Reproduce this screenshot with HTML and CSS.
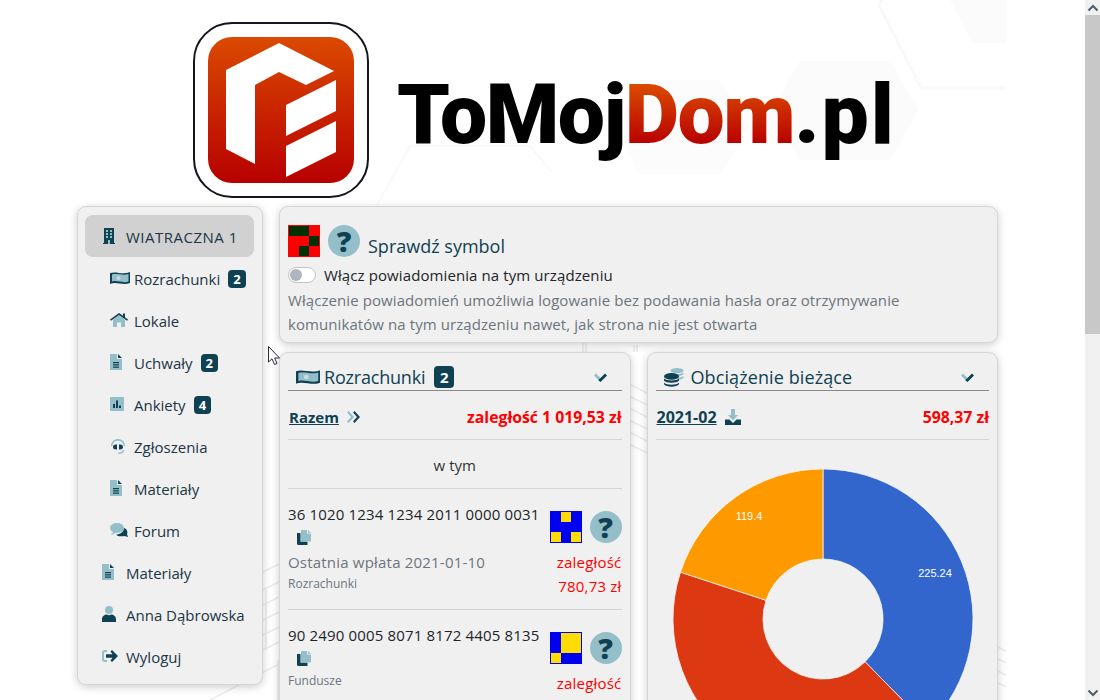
FILE: index.html
```html
<!DOCTYPE html>
<html lang="pl">
<head>
  <meta charset="UTF-8" />
  <meta name="viewport" content="width=device-width, initial-scale=1.0"/>
  <title>ToMojDom.pl</title>
  <link rel="stylesheet" href="styles.css">
</head>
<body>
  <div class="page">
    <div class="wrap">
      <!-- tlo: blade szesciokaty i linie budynku -->
      <svg class="bg-art" width="1006" height="700" viewBox="0 0 1006 700" fill="none">
        <path d="M879 5 L921 88 L1006 88 M879 5 L882 0" stroke="#f9f9f9" stroke-width="3"/>
        <path d="M950 0 L973 43 L1006 43 L1006 0 Z" fill="#fbfbfb"/>
        <path d="M800 61 L890 61 L918 110 L890 160 L800 160 L772 110 Z" fill="#fbfbfb"/>
        <path d="M640 80 L720 80 L750 127 L720 175 L640 175 L617 127 Z" fill="#fcfcfc"/>
        <path d="M376 207 L410 146 L530 146 L552 172" stroke="#f9f9f9" stroke-width="2"/>
        <g stroke="#ececec" stroke-width="1.500">
          <path d="M583 343 V352 M586 343 V352 M634 352 V345 M637 352 V345"/>
          <path d="M263 572 L279 564 M263 590 L279 582 M263 605 L279 597 M263 620 L279 612 M263 635 L279 627 M263 650 L279 642 M210 700 L279 664 M266 590 V650 M278 660 V700 M281 660 V700"/>
          <path d="M631 385 L647 393 M631 397 L647 405 M631 409 L647 417 M631 421 L647 429 M631 433 L647 441 M631 445 L647 453"/>
          <path d="M998 647 L1006 651 M998 659 L1006 663 M998 671 L1006 675 M998 683 L1006 687"/>
        </g>
      </svg>

      <header class="brand">
        <svg class="logo" width="176" height="176" viewBox="0 0 176 176">
          <defs>
            <linearGradient id="red" x1="0" y1="0" x2="0" y2="1">
              <stop offset="0" stop-color="#db4a00"/>
              <stop offset="1" stop-color="#b70000"/>
            </linearGradient>
          </defs>
          <rect x="1" y="1" width="174" height="174" rx="38" fill="#fff" stroke="#15151f" stroke-width="2"/>
          <rect x="15" y="15" width="146" height="146" rx="24" fill="url(#red)"/>
          <path fill="#fff" d="M33 48 L86 21 L141 49 L113 63 L86 50 L62 63 L62 142 L33 127 Z"/>
          <path fill="#fff" d="M93 83 L143 58 L143 89 L93 114 Z"/>
          <path fill="#fff" d="M93 124 L143 99 L143 130 L93 155 Z"/>
        </svg>
        <div class="brand-name">ToMoj<span class="brand-accent">Dom</span><span class="brand-tld">.pl</span></div>
      </header>

      <div class="columns">
        <nav class="card sidebar">
          <a class="nav-item active"><span class="slot"><svg width="12" height="16" viewBox="0 0 12 16"><path class="d" d="M1 0H11V15H12V16H0V15H1Z"/><path class="l" d="M3 2h2v2H3zM7 2h2v2H7zM3 5h2v2H3zM7 5h2v2H7zM3 8h2v2H3zM7 8h2v2H7z"/><path class="l" d="M5 12h2v4H5z"/></svg></span>WIATRACZNA 1</a>
          <a class="nav-item sub"><span class="slot"><svg width="20" height="14" viewBox="0 0 20 14"><path class="l" d="M1 3 C6 1 12 5 19 2 V11 C13 14 7 9 1 12 Z"/><path class="d" d="M0 2 C6 0 13 4 20 1 V12 C13 15 6 10 0 13 Z M2 3.500 V10.500 C7 9 13 12.500 18.500 10.500 V3 C13 5 7 2 2 3.500 Z"/><circle cx="8.500" cy="7" r="2" fill="#c5dde2"/></svg></span>Rozrachunki<span class="badge">2</span></a>
          <a class="nav-item sub"><span class="slot"><svg width="18" height="14" viewBox="0 0 18 14"><path class="l" d="M3 7 L9 2 L15 7 V14 H11 V9.500 H7 V14 H3 Z"/><path class="d" d="M0 6.500 L9 0 L13 2.800 V0.500 H15 V4.300 L18 6.500 L17 7.700 L9 2 L1 7.700 Z"/></svg></span>Lokale</a>
          <a class="nav-item sub"><span class="slot"><svg width="12" height="16" viewBox="0 0 12 16"><path class="l" d="M0 0H7V5H12V16H0Z"/><path class="d" d="M8 0L12 4H8ZM3 8h6v1.200H3zM3 10.300h6v1.200H3zM3 12.600h6v1.200H3z"/></svg></span>Uchwały<span class="badge">2</span></a>
          <a class="nav-item sub"><span class="slot"><svg width="14" height="14" viewBox="0 0 14 14"><rect class="l" width="14" height="14" rx="1"/><path class="d" d="M3 7h2v4H3zM6 3.500h2V11H6zM9 8.500h2V11H9z"/></svg></span>Ankiety<span class="badge">4</span></a>
          <a class="nav-item sub"><span class="slot"><svg width="16" height="16" viewBox="0 0 16 16"><path class="l" d="M1 8 C1 -1.500 15 -1.500 15 8 H13.500 C13.500 1 2.500 1 2.500 8 Z M12.500 12 H14 C14 15 12 15.800 8 15.800 V14.500 C11 14.500 12.500 14 12.500 12 Z"/><path class="d" d="M7 6.500 C4 6 3 7.500 3 9 C3 10.500 4 12 7 11.500 Z M9 6.500 C12 6 13 7.500 13 9 C13 10.500 12 12 9 11.500 Z"/></svg></span>Zgłoszenia</a>
          <a class="nav-item sub"><span class="slot"><svg width="12" height="16" viewBox="0 0 12 16"><path class="l" d="M0 0H7V5H12V16H0Z"/><path class="d" d="M8 0L12 4H8ZM3 8h6v1.200H3zM3 10.300h6v1.200H3zM3 12.600h6v1.200H3z"/></svg></span>Materiały</a>
          <a class="nav-item sub"><span class="slot"><svg width="18" height="14" viewBox="0 0 18 14"><ellipse class="l" cx="7" cy="5" rx="7" ry="5"/><path class="l" d="M1 12 L4 8 L6 9.500 C4 11 3 12 1 12Z"/><path class="d" d="M14 5 C17 6 18 9 17 11 L18 14 L14.500 13 C12 13.500 7 13.500 6 11.500 C10 11.500 14 9 14 5Z"/></svg></span>Forum</a>
          <a class="nav-item"><span class="slot"><svg width="12" height="16" viewBox="0 0 12 16"><path class="l" d="M0 0H7V5H12V16H0Z"/><path class="d" d="M8 0L12 4H8ZM3 8h6v1.200H3zM3 10.300h6v1.200H3zM3 12.600h6v1.200H3z"/></svg></span>Materiały</a>
          <a class="nav-item"><span class="slot"><svg width="14" height="16" viewBox="0 0 14 16"><circle class="l" cx="7" cy="4" r="4"/><path class="d" d="M0 16 V13 C0 10 3 8.500 4.500 8.500 C6 9.500 8 9.500 9.500 8.500 C11 8.500 14 10 14 13 V16 Z"/></svg></span>Anna Dąbrowska</a>
          <a class="nav-item"><span class="slot"><svg width="16" height="14" viewBox="0 0 16 14"><path class="l" d="M5 1 V3 H3 C2.400 3 2 3.400 2 4 V10 C2 10.600 2.400 11 3 11 H5 V13 H3 C1.300 13 0 11.700 0 10 V4 C0 2.300 1.300 1 3 1 Z"/><path class="d" d="M10 1 L16 7 L10 13 L8.500 11.500 L10.500 8.800 H4 V5.200 H10.500 L8.500 2.500 Z"/></svg></span>Wyloguj</a>
        </nav>

        <main class="content">
          <section class="card notify">
            <div class="symbol-row">
              <svg width="32" height="32" viewBox="0 0 32 32" shape-rendering="crispEdges"><rect width="32" height="32" fill="#f00"/><path fill="#003200" d="M1 1h20v10H1zM21 11h10v10H21zM11 21h10v10H11z"/></svg>
              <span class="help">?</span>
              <span class="symbol-title">Sprawdź symbol</span>
            </div>
            <div class="toggle-row"><span class="toggle"><span class="knob"></span></span>Włącz powiadomienia na tym urządzeniu</div>
            <p class="hint">Włączenie powiadomień umożliwia logowanie bez podawania hasła oraz otrzymywanie komunikatów na tym urządzeniu nawet, jak strona nie jest otwarta</p>
          </section>

          <div class="panels">
            <section class="card panel">
              <h3 class="panel-title">
                <svg class="title-ico" width="24" height="16" viewBox="0 0 20 14" preserveAspectRatio="none"><path class="l" d="M1 3 C6 1 12 5 19 2 V11 C13 14 7 9 1 12 Z"/><path class="d" d="M0 2 C6 0 13 4 20 1 V12 C13 15 6 10 0 13 Z M2 3.500 V10.500 C7 9 13 12.500 18.500 10.500 V3 C13 5 7 2 2 3.500 Z"/><circle cx="8.500" cy="7" r="2" fill="#c5dde2"/></svg>
                <span class="title-tight">Rozrachunki</span><span class="badge big">2</span>
                <svg class="chevron" width="13" height="9" viewBox="0 0 13 9"><path class="l" d="M0 2.500 L2 0.500 L6.500 5 L6.500 9 Z"/><path class="d" d="M13 2.500 L11 0.500 L6 5.500 L4.200 7 L6.500 9 Z"/></svg>
              </h3>
              <div class="sum-row">
                <span class="sum-left"><a class="sum-link">Razem</a><svg width="14" height="12" viewBox="0 0 14 12"><path class="l" d="M0 1.500 L1.500 0 L7 6 L1.500 12 L0 10.500 L4 6 Z"/><path class="d" d="M6 1.500 L7.500 0 L13 6 L7.500 12 L6 10.500 L10 6 Z"/></svg></span>
                <b class="debt">zaległość 1 019,53 zł</b>
              </div>
              <div class="of-which">w tym</div>
              <div class="account">
                <div class="account-info">
                  <div class="iban">36 1020 1234 1234 2011 0000 0031</div>
                  <svg class="copy" width="14" height="15" viewBox="0 0 14 15"><path class="l" d="M4 0H10V3.500H14V11.500H4Z"/><path class="l" d="M11 0L14 2.800H11Z"/><path class="d" d="M0 3H3.500V11.800H10.500V15H1.500C0.600 15 0 14.400 0 13.500Z"/></svg>
                  <div class="muted">Ostatnia wpłata 2021-01-10</div>
                  <div class="small">Rozrachunki</div>
                </div>
                <div class="account-side">
                  <div class="marks">
                    <svg width="32" height="32" viewBox="0 0 32 32" shape-rendering="crispEdges"><rect width="32" height="32" fill="#0000f0"/><path fill="#ffdd00" d="M11 1h10v10H11zM1 21h10v10H1zM21 21h10v10H21z"/></svg>
                    <span class="help">?</span>
                  </div>
                  <div class="owed">zaległość<br>780,73 zł</div>
                </div>
              </div>
              <div class="account last">
                <div class="account-info">
                  <div class="iban">90 2490 0005 8071 8172 4405 8135</div>
                  <svg class="copy" width="14" height="15" viewBox="0 0 14 15"><path class="l" d="M4 0H10V3.500H14V11.500H4Z"/><path class="l" d="M11 0L14 2.800H11Z"/><path class="d" d="M0 3H3.500V11.800H10.500V15H1.500C0.600 15 0 14.400 0 13.500Z"/></svg>
                  <div class="small after-copy">Fundusze</div>
                </div>
                <div class="account-side">
                  <div class="marks">
                    <svg width="32" height="32" viewBox="0 0 32 32" shape-rendering="crispEdges"><rect width="32" height="32" fill="#0000f0"/><path fill="#ffdd00" d="M11 1h20v20H11zM1 21h10v10H1z"/></svg>
                    <span class="help">?</span>
                  </div>
                  <div class="owed">zaległość</div>
                </div>
              </div>
            </section>

            <section class="card panel">
              <h3 class="panel-title">
                <svg class="title-ico" width="20" height="19" viewBox="0 0 20 18" preserveAspectRatio="none"><g class="l"><ellipse cx="13" cy="2.500" rx="6.500" ry="2.500"/><path d="M7 5 C9 6 17 6 19.500 4.500 V6 C18 7.500 14 8 12 7.500 Z"/><path d="M14 9 C16 9 18 8.500 19.500 7.500 V9.500 C18.500 10.500 16 11 14 11 Z"/></g><g class="d"><ellipse cx="7.500" cy="8" rx="7.500" ry="3.200"/><path d="M0 10 C2 12.500 13 12.500 15 10 V12 C13 14.500 2 14.500 0 12 Z"/><path d="M0 14 C2 16.500 13 16.500 15 14 V15.500 C13 18.500 2 18.500 0 15.500 Z"/></g></svg>
                <span class="title-gap">Obciążenie bieżące</span>
                <svg class="chevron" width="13" height="9" viewBox="0 0 13 9"><path class="l" d="M0 2.500 L2 0.500 L6.500 5 L6.500 9 Z"/><path class="d" d="M13 2.500 L11 0.500 L6 5.500 L4.200 7 L6.500 9 Z"/></svg>
              </h3>
              <div class="sum-row">
                <span class="sum-left"><a class="sum-link date">2021-02</a><svg width="16" height="16" viewBox="0 0 16 16"><path class="l" d="M6 0H10V6H13L8 11.500L3 6H6Z"/><path class="d" d="M0 10.500H4.500L8 14L11.500 10.500H16V16H0Z"/></svg></span>
                <b class="debt">598,37 zł</b>
              </div>
              <svg class="donut" width="300" height="300" viewBox="0 0 300 300">
                <path fill="#3366cc" stroke="#fff" stroke-width="0.700" d="M150 0 A150 150 0 0 1 255.100 257 L192.100 192.800 A60 60 0 0 0 150 90 Z"/>
                <path fill="#dc3912" stroke="#fff" stroke-width="0.700" d="M255.100 257 A150 150 0 0 1 7.500 103.200 L93 131.300 A60 60 0 0 0 192.100 192.800 Z"/>
                <path fill="#ff9900" stroke="#fff" stroke-width="0.700" d="M7.500 103.200 A150 150 0 0 1 150 0 L150 90 A60 60 0 0 0 93 131.300 Z"/>
                <text class="donut-label" x="262" y="108" text-anchor="middle">225.24</text>
                <text class="donut-label" x="76" y="51" text-anchor="middle">119.4</text>
              </svg>
            </section>
          </div>
        </main>
      </div>

      <!-- kursor myszy nad trescia -->
      <svg class="cursor" width="13" height="20" viewBox="0 0 13 20"><path d="M0.500 0.500 V16 L4 12.800 L6.500 18.500 L9 17.400 L6.600 12 H11.500 Z" fill="#fff" stroke="#2a2a35" stroke-width="1"/></svg>
    </div>

    <aside class="scrollbar">
      <span class="scroll-btn"><svg width="12" height="8" viewBox="0 0 12 8"><path d="M1.500 6.500 L6 2 L10.500 6.500" fill="none" stroke="#505a6e" stroke-width="2"/></svg></span>
      <span class="scroll-thumb"></span>
      <span class="scroll-rest"></span>
      <span class="scroll-btn"><svg width="12" height="8" viewBox="0 0 12 8"><path d="M1.500 1.500 L6 6 L10.500 1.500" fill="none" stroke="#505a6e" stroke-width="2"/></svg></span>
    </aside>
  </div>
</body>
</html>
```

FILE: styles.css
```css
html, body {
  margin: 0;
  height: 700px;
  overflow: hidden;
  background: #fff;
}

body {
  font-family: 'Open Sans', 'Noto Sans', sans-serif;
  font-size: 15px;
  color: #212529;
}

.page {
  display: flex;
  height: 700px;
  overflow: hidden;
}

.wrap {
  position: relative;
  flex: 0 0 1006px;
  height: 700px;
  overflow: hidden;
}

.bg-art {
  position: absolute;
  top: 0;
  left: 0;
}

.cursor {
  position: absolute;
  top: 346px;
  left: 268px;
}

.d { fill: #0f4153; }
.l { fill: #94bfc9; }

/* naglowek z logo */
.brand {
  position: relative;
  display: flex;
  align-items: center;
  height: 176px;
  padding: 22px 0 8px 193px;
}

.brand-name {
  margin: 10px 0 0 28px;
  font-family: 'Roboto', 'Liberation Sans', sans-serif;
  font-size: 84px;
  font-weight: 900;
  line-height: 100px;
  letter-spacing: -1.5px;
  color: #000;
}

.brand-accent {
  background: linear-gradient(#db4a00 20%, #b70000 80%);
  -webkit-background-clip: text;
  background-clip: text;
  color: transparent;
}

.brand-tld {
  letter-spacing: 2px;
}

.columns {
  position: relative;
  display: flex;
  align-items: flex-start;
  gap: 16px;
  padding-left: 77px;
}

.card {
  background: #f0f0f0;
  border: 1px solid #d6d6d6;
  border-radius: 9px;
  box-shadow: 0 2px 8px rgba(0, 0, 0, 0.2);
  box-sizing: border-box;
}

.sidebar {
  flex: 0 0 186px;
  padding: 8px 8px 7px 7px;
  height: 479px;
}

.nav-item {
  display: flex;
  align-items: center;
  box-sizing: border-box;
  height: 42px;
  padding: 2px 0 0 17px;
  font-size: 15px;
  color: #1c3545;
}

.slot {
  display: flex;
  flex: 0 0 24px;
  align-items: center;
  margin-top: -2px;
}

.nav-item.sub {
  padding-left: 25px;
}

.nav-item.active {
  background: #d1d1d1;
  border-radius: 8px;
  letter-spacing: 0.5px;
}

.nav-item.active .slot svg {
  margin-left: 1px;
}

.badge {
  display: inline-block;
  margin-left: 8px;
  padding: 0 5px;
  min-width: 6px;
  height: 18px;
  line-height: 18px;
  border-radius: 4px;
  background: #0f4153;
  color: #fff;
  font-size: 13px;
  font-weight: 700;
  text-align: center;
}

.badge.big {
  min-width: 10px;
  height: 22px;
  margin-left: 9px;
  line-height: 22px;
  font-size: 15px;
}

.content {
  flex: 0 0 719px;
}

.notify {
  height: 137px;
  padding: 18px 8px 0;
}

.symbol-row {
  display: flex;
  align-items: flex-end;
  height: 32px;
}

.help {
  display: flex;
  flex: none;
  align-items: center;
  justify-content: center;
  width: 32px;
  height: 32px;
  border-radius: 50%;
  background: #94bfc9;
  color: #0f4153;
  font-size: 29px;
  font-weight: 800;
  line-height: 32px;
}

.symbol-row .help {
  margin-left: 8px;
}

.symbol-title {
  margin: 0 0 -1px 8px;
  font-size: 18px;
  line-height: 24px;
  color: #0f4153;
}

.toggle-row {
  display: flex;
  align-items: center;
  height: 20px;
  margin-top: 8px;
  font-size: 15px;
  letter-spacing: 0.1px;
}

.toggle {
  flex: none;
  box-sizing: border-box;
  width: 28px;
  height: 16px;
  margin-right: 8px;
  padding: 1px;
  border: 1px solid #c4c4c4;
  border-radius: 8px;
  background: #fff;
}

.knob {
  display: block;
  width: 12px;
  height: 12px;
  border-radius: 50%;
  background: #adb5bd;
}

.hint {
  margin: 3px 0 0;
  font-size: 15px;
  line-height: 24px;
  letter-spacing: 0.08px;
  color: #6c757d;
}

.panels {
  display: flex;
  gap: 16px;
  margin-top: 9px;
}

.panel {
  flex: 1 1 0;
  height: 420px;
  padding: 0 8px;
  overflow: hidden;
}

.panel-title {
  display: flex;
  align-items: center;
  margin: 0;
  height: 26px;
  padding: 11px 0 0 8px;
  font-size: 18px;
  font-weight: 400;
  color: #0f4153;
  border-bottom: 1px solid #888;
}

.title-ico {
  margin-right: 4px;
}

.title-tight {
  letter-spacing: -0.2px;
}

.title-gap {
  margin-left: 3px;
  letter-spacing: 0.1px;
}

.chevron {
  margin-left: auto;
  margin-right: 15px;
}

.sum-row {
  display: flex;
  align-items: center;
  justify-content: space-between;
  height: 45px;
  padding-top: 3px;
  border-bottom: 1px solid #d4d4d4;
  font-size: 15px;
}

.sum-left {
  display: flex;
  align-items: center;
  gap: 8px;
  padding-left: 1px;
}

.sum-link {
  font-weight: 700;
  color: #0f4153;
  text-decoration: underline;
}

.sum-link.date {
  font-size: 16px;
}

.debt {
  font-size: 15.8px;
  color: #f00;
}

.of-which {
  height: 48px;
  line-height: 51px;
  text-align: center;
  border-bottom: 1px solid #d4d4d4;
  font-size: 15px;
  color: #333;
}

.account {
  display: flex;
  justify-content: space-between;
  padding: 13px 0 11px;
  border-bottom: 1px solid #d4d4d4;
}

.account.last {
  border-bottom: none;
}

.iban {
  line-height: 24px;
  letter-spacing: 0.16px;
}

.copy {
  display: block;
  margin: 4px 0 0 9px;
}

.muted {
  margin-top: 5px;
  color: #6c757d;
  line-height: 24px;
  letter-spacing: 0.2px;
}

.small {
  margin-top: 1px;
  color: #6c757d;
  font-size: 12px;
  line-height: 18px;
}

.small.after-copy {
  margin-top: 6px;
}

.account-side {
  display: flex;
  flex-direction: column;
  align-items: flex-end;
}

.marks {
  display: flex;
  gap: 8px;
  margin-top: 9px;
}

.owed {
  margin-top: 7px;
  line-height: 24px;
  letter-spacing: 0.2px;
  color: #f00;
  text-align: right;
}

.donut {
  display: block;
  margin: 29px 0 0 17px;
}

.donut-label {
  font-family: 'Liberation Sans', Arial, sans-serif;
  font-size: 11px;
  fill: #fff;
}

/* pasek przewijania */
.scrollbar {
  display: flex;
  flex-direction: column;
  margin-left: 79px;
  flex: 0 0 15px;
  background: #f1f1f1;
}

.scroll-btn {
  display: flex;
  align-items: center;
  justify-content: center;
  height: 15px;
}

.scroll-thumb {
  height: 319px;
  background: #c8c8c8;
}

.scroll-rest {
  flex: 1;
}
```
